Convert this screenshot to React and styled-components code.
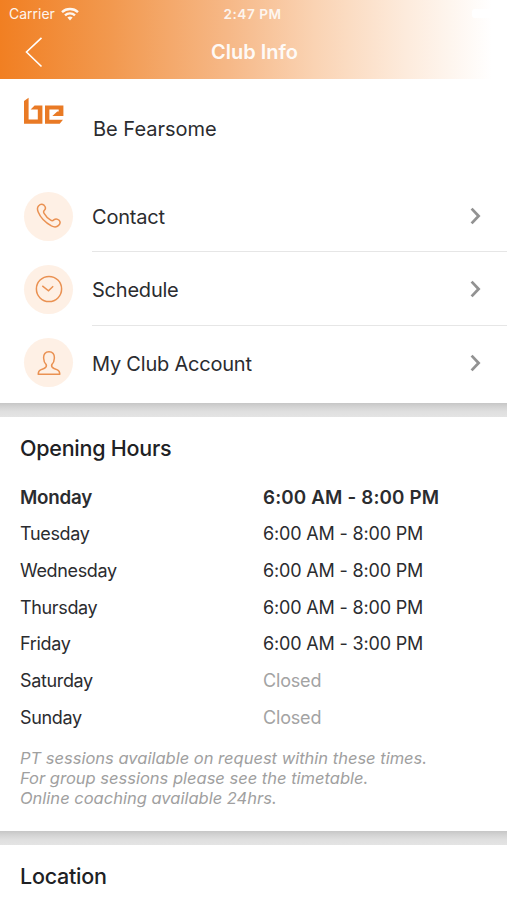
import React from 'react';
import styled, { createGlobalStyle } from 'styled-components';

const GlobalStyle = createGlobalStyle`
  * {
    box-sizing: border-box;
  }

  body {
    margin: 0;
    background-color: #fff;
    color: #2b2c2f;
    font-family: Inter, 'Liberation Sans', sans-serif;
  }

  h1, h2, p, ul, dl, dd, dt {
    margin: 0;
    padding: 0;
  }
`;

const Screen = styled.div`
  width: 100%;
  height: 900px;
  overflow: hidden;
`;

const Header = styled.header`
  height: 79px;
  color: #fff;
  background: linear-gradient(90deg, #f17f22 0%, #f2994f 22%, #f6b887 45%, #fad3b3 62%, #fdebdc 80%, #fff 97%);
`;

const StatusBar = styled.div`
  height: 27px;
  padding: 0 11px 0 9px;
  display: grid;
  grid-template-columns: 1fr auto 1fr;
  align-items: center;
  font-size: 14px;

  .carrier {
    display: flex;
    align-items: center;
    gap: 6px;
    opacity: 0.92;
  }

  .time {
    font-weight: 600;
    font-size: 13.6px;
    letter-spacing: 0.5px;
    opacity: 0.85;
  }

  .battery {
    justify-self: end;
    width: 24px;
    height: 9px;
    border-radius: 3px;
    background-color: #fff;
  }
`;

const NavBar = styled.div`
  height: 50px;
  padding: 0 24px;
  display: grid;
  grid-template-columns: 1fr auto 1fr;
  align-items: center;

  h1 {
    padding-left: 2px;
    font-size: 20px;
    font-weight: 600;
    opacity: 0.92;
  }
`;

const BackButton = styled.button`
  width: 20px;
  height: 32px;
  padding: 0;
  border: 0;
  background: none;
  color: inherit;
  cursor: pointer;

  svg {
    display: block;
  }
`;

const Card = styled.section`
  background-color: #fff;
`;

const Divider = styled.div`
  height: 14px;
  background: linear-gradient(180deg, #c6c6c6 0%, #d2d2d2 25%, #dfdfdf 60%, #e4e4e4 100%);
`;

const ClubCard = styled(Card)`
  height: 324px;
`;

const Club = styled.div`
  height: 100px;
  padding: 18px 0 0 23px;
  display: flex;
  gap: 29px;

  p {
    padding-top: 20px;
    font-size: 20px;
    line-height: 24px;
  }
`;

const MenuList = styled.ul`
  list-style: none;
`;

const MenuItem = styled.li`
  height: 73.3px;
  padding-left: 24px;
  display: flex;
  align-items: center;
  gap: 19px;
  cursor: pointer;

  .label {
    flex: 1;
    height: 100%;
    padding: 2px 26px 0 0;
    display: flex;
    align-items: center;
    justify-content: space-between;
    border-bottom: ${(props) => (props.$last ? '0' : '1.5px solid #e6e6e6')};
    font-size: 20px;
    letter-spacing: -0.22px;
  }

  .label span {
    padding-top: 1px;
  }
`;

const IconCircle = styled.div`
  width: 49px;
  height: 49px;
  margin-top: 1px;
  border-radius: 50%;
  display: flex;
  align-items: center;
  justify-content: center;
  background-color: #fef0e5;
`;

const HoursCard = styled(Card)`
  height: 414px;
  padding: 18px 20px 0;
`;

const Title = styled.h2`
  font-size: 21.5px;
  font-weight: 500;
  line-height: 26px;
  letter-spacing: -0.25px;
  color: #202124;
`;

const Hours = styled.dl`
  padding-top: 18px;
`;

const Day = styled.div`
  height: 36.67px;
  display: grid;
  grid-template-columns: 243px 1fr;
  align-items: center;
  font-size: ${(props) => (props.$today ? '18.8px' : '18px')};
  font-weight: ${(props) => (props.$today ? 600 : 400)};

  dt {
    letter-spacing: ${(props) => (props.$today ? '-0.25px' : '-0.35px')};
  }

  dd {
    letter-spacing: ${(props) => (props.$today ? '0.15px' : '-0.17px')};
    color: ${(props) => (props.$closed ? '#a3a3a3' : 'inherit')};
  }
`;

const Note = styled.p`
  padding-top: 12px;
  font-size: 16.5px;
  line-height: 20.4px;
  font-style: italic;
  color: #a0a0a0;
  white-space: nowrap;
`;

const LocationCard = styled(Card)`
  height: 55px;
  padding: 18px 20px 0;
`;

const days = [
  { name: 'Monday', time: '6:00 AM - 8:00 PM', today: true },
  { name: 'Tuesday', time: '6:00 AM - 8:00 PM' },
  { name: 'Wednesday', time: '6:00 AM - 8:00 PM' },
  { name: 'Thursday', time: '6:00 AM - 8:00 PM' },
  { name: 'Friday', time: '6:00 AM - 3:00 PM' },
  { name: 'Saturday', time: 'Closed' },
  { name: 'Sunday', time: 'Closed' },
];

function WifiIcon() {
  return (
    <svg width='18' height='14' viewBox='0 0 18 14' fill='none' stroke='#fff' strokeWidth='2.4'>
      <path d='M1 5.1C5.4 .9 12.6 .9 17 5.1' />
      <path d='M4 8.3C6.8 5.7 11.2 5.7 14 8.3' />
      <path d='M6.4 10.6Q9 8.4 11.6 10.6L9 13.4Z' fill='#fff' stroke='none' />
    </svg>
  );
}

function BackIcon() {
  return (
    <svg width='20' height='32' viewBox='0 0 20 32' fill='none' stroke='#fff' strokeWidth='1.6'>
      <path d='M17.5 1.8L2.5 16L17.5 30.5' />
    </svg>
  );
}

function ChevronIcon() {
  return (
    <svg width='11' height='18' viewBox='0 0 11 18' fill='none' stroke='#929292' strokeWidth='2.8'>
      <path d='M1.6 1.6L8.6 9L1.6 16.4' />
    </svg>
  );
}

function ClubLogo() {
  return (
    <svg width='41' height='28' viewBox='0 0 41 28' fill='#e97a25'>
      <path d='M1 4L5.6 .7V22.4H14.8V12.6H7.6L11.6 8.4H19.4V26.7H1Z' />
      <path fillRule='evenodd' d='M22 8.4H40.4V19H29.3L34.3 14.6H35.7V12.6H26.4V22.7H40L36.7 26.7H22Z' />
    </svg>
  );
}

function PhoneIcon() {
  return (
    <svg width='26' height='26' viewBox='0 0 26 26' fill='none' stroke='#ea9152' strokeWidth='1.5' strokeLinejoin='round'>
      <path d='M2.5 2.9Q5.2 .1 8 2.2Q10.7 4.8 8.4 7.2Q7 8.6 8.1 10.4Q10.6 14.8 14.7 17.2Q16.4 18.3 17.8 16.9Q20.4 14.9 23.1 17.3Q25.3 19.8 22.6 22.4Q19.8 25.2 15.4 22.9Q5.6 17.4 2.2 9Q.6 5.1 2.5 2.9Z' />
    </svg>
  );
}

function ClockIcon() {
  return (
    <svg width='28' height='28' viewBox='0 0 28 28' fill='none' stroke='#ea9152' strokeWidth='1.5'>
      <circle cx='14' cy='14' r='12.6' />
      <path d='M7.3 10.8L13.5 15.8L18.2 11.2' />
    </svg>
  );
}

function PersonIcon() {
  return (
    <svg width='24' height='26' viewBox='0 0 24 26' fill='none' stroke='#ea9152' strokeWidth='1.5' strokeLinejoin='round'>
      <path d='M12 1.7C8.3 1.7 6.4 4.3 6.6 8C6.7 10.7 7.7 13.2 9.2 14.6C9.9 16.5 9.2 17.6 7 18.5L3.6 19.9C1.8 20.7 1.3 22.1 1.2 24.2H22.8C22.7 22.1 22.2 20.7 20.4 19.9L17 18.5C14.8 17.6 14.1 16.5 14.8 14.6C16.3 13.2 17.3 10.7 17.4 8C17.6 4.3 15.7 1.7 12 1.7Z' />
    </svg>
  );
}

const menu = [
  { label: 'Contact', icon: <PhoneIcon /> },
  { label: 'Schedule', icon: <ClockIcon /> },
  { label: 'My Club Account', icon: <PersonIcon /> },
];

function App() {
  return (
    <>
      <GlobalStyle />
      <Screen>
        <Header>
          <StatusBar>
            <div className='carrier'>
              <span>Carrier</span>
              <WifiIcon />
            </div>
            <span className='time'>2:47 PM</span>
            <div className='battery' />
          </StatusBar>
          <NavBar>
            <BackButton aria-label='Back'><BackIcon /></BackButton>
            <h1>Club Info</h1>
          </NavBar>
        </Header>

        <ClubCard>
          <Club>
            <ClubLogo />
            <p>Be Fearsome</p>
          </Club>
          <MenuList>
            {menu.map((item, index) => (
              <MenuItem key={item.label} $last={index === menu.length - 1}>
                <IconCircle>{item.icon}</IconCircle>
                <div className='label'>
                  <span>{item.label}</span>
                  <ChevronIcon />
                </div>
              </MenuItem>
            ))}
          </MenuList>
        </ClubCard>
        <Divider />

        <HoursCard>
          <Title>Opening Hours</Title>
          <Hours>
            {days.map((day) => (
              <Day key={day.name} $today={day.today} $closed={day.time === 'Closed'}>
                <dt>{day.name}</dt>
                <dd>{day.time}</dd>
              </Day>
            ))}
          </Hours>
          <Note>
            PT sessions available on request within these times.<br />
            For group sessions please see the timetable.<br />
            Online coaching available 24hrs.
          </Note>
        </HoursCard>
        <Divider />

        <LocationCard>
          <Title>Location</Title>
        </LocationCard>
      </Screen>
    </>
  );
}

export default App;
